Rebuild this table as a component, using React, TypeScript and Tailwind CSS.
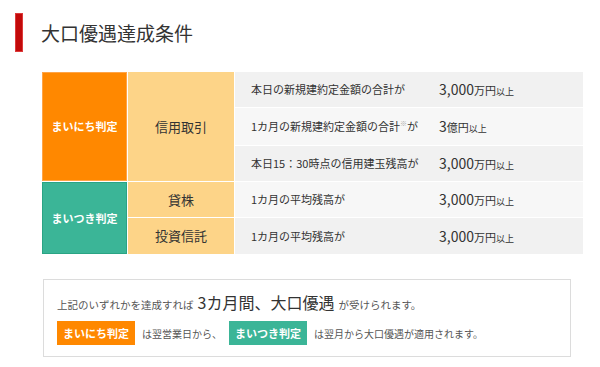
const FONT = "font-['Noto_Sans_CJK_JP','Noto_Sans',sans-serif]";

type Row = { text: React.ReactNode; amount: React.ReactNode; shade: string };

function Amount({ num, unit }: { num: string; unit: string }) {
  return (
    <span className="text-[#333] whitespace-nowrap">
      <span className="text-[14px]">{num}</span>
      <span className="text-[11px]">{unit}</span>
      <span className="text-[9px]">以上</span>
    </span>
  );
}

const rows: Row[] = [
  { text: "本日の新規建約定金額の合計が", amount: <Amount num="3,000" unit="万円" />, shade: "bg-[#f1f1f1]" },
  {
    text: (
      <>
        1カ月の新規建約定金額の合計<span className="text-[7px] align-top text-[#aaa]">※</span>が
      </>
    ),
    amount: <Amount num="3" unit="億円" />,
    shade: "bg-[#f7f7f7]",
  },
  { text: "本日15：30時点の信用建玉残高が", amount: <Amount num="3,000" unit="万円" />, shade: "bg-[#f1f1f1]" },
  { text: "1カ月の平均残高が", amount: <Amount num="3,000" unit="万円" />, shade: "bg-[#f7f7f7]" },
  { text: "1カ月の平均残高が", amount: <Amount num="3,000" unit="万円" />, shade: "bg-[#f1f1f1]" },
];

function Cell({ row }: { row: Row }) {
  return (
    <div className={`${row.shade} grid grid-cols-[188px_1fr] items-center pl-4 text-[11px] text-[#333]`}>
      <span>{row.text}</span>
      {row.amount}
    </div>
  );
}

export default function App() {
  return (
    <div className={`w-[600px] h-[367px] bg-white overflow-hidden ${FONT}`}>
      {/* heading */}
      <div className="flex items-center pt-[13px] pl-[15px]">
        <div className="w-[8px] h-[39px] bg-[#c20a0a] border border-[#dd3a3a]" />
        <h2 className="ml-[18px] text-[19px] text-[#333] leading-none">大口優遇達成条件</h2>
      </div>

      {/* conditions table */}
      <div className="mt-[20px] ml-[42px] mr-[17px] grid grid-cols-[85px_106px_1fr] grid-rows-[35px_37px_35px_35px_36px] gap-px bg-white">
        <div className="row-span-3 bg-[#ff8800] border border-[#ffa447] flex items-center justify-center text-white font-bold text-[11px]">
          まいにち判定
        </div>
        <div className="row-span-3 bg-[#fdd488] flex items-center justify-center text-[13px] text-[#333]">
          信用取引
        </div>
        <Cell row={rows[0]} />
        <Cell row={rows[1]} />
        <Cell row={rows[2]} />
        <div className="row-span-2 bg-[#3bb597] border border-[#2aa484] flex items-center justify-center text-white font-bold text-[11px]">
          まいつき判定
        </div>
        <div className="bg-[#fdd488] flex items-center justify-center text-[13px] text-[#333]">貸株</div>
        <Cell row={rows[3]} />
        <div className="bg-[#fdd488] flex items-center justify-center text-[13px] text-[#333]">投資信託</div>
        <Cell row={rows[4]} />
      </div>

      {/* note box */}
      <div className="mt-[25px] ml-[43px] w-[528px] h-[78px] border border-[#dcdcdc] pl-[13px] pt-[12px] text-[#555]">
        <p className="flex items-baseline text-[10.5px] leading-[20px]">
          上記のいずれかを達成すれば
          <span className="mx-[4px] text-[16px] text-[#333]">3カ月間、大口優遇</span>
          が受けられます。
        </p>
        <div className="mt-[6px] flex items-center text-[10px]">
          <span className="h-[24px] px-[6px] flex items-center bg-[#ff8800] text-white font-bold text-[11px]">
            まいにち判定
          </span>
          <span className="ml-[7px]">は翌営業日から、</span>
          <span className="ml-[7px] h-[24px] px-[6px] flex items-center bg-[#3bb597] text-white font-bold text-[11px]">
            まいつき判定
          </span>
          <span className="ml-[7px]">は翌月から大口優遇が適用されます。</span>
        </div>
      </div>
    </div>
  );
}
